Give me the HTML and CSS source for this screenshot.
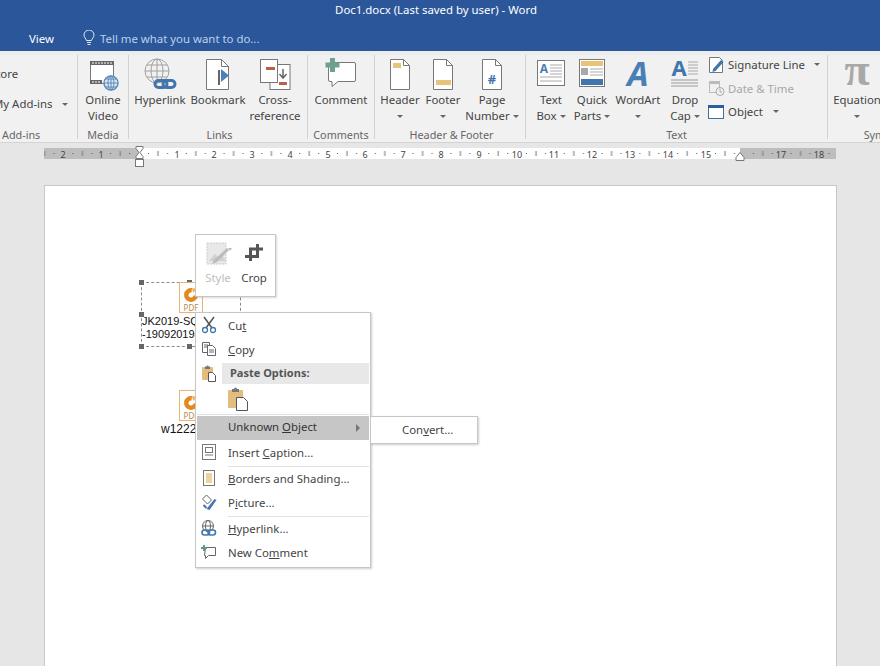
FILE: index.html
```html
<!DOCTYPE html>
<html lang="en">
<head>
<meta charset="utf-8">
<title>Doc1.docx - Word</title>
<link rel="stylesheet" href="styles.css">
</head>
<body>
<div class="app">
  <header class="titlebar">
    <div class="title">Doc1.docx (Last saved by user) - Word</div>
    <div class="tabs">
      <span class="tab">View</span>
      <svg class="bulb" width="12" height="16" viewBox="0 0 12 16"><path d="M3.500 10.500C3 8.500 1 7.500 1 5a5 5 0 0 1 10 0c0 2.500-2 3.500-2.500 5.500zM4 12.500h4M4.500 14.500h3" fill="none" stroke="#dfe8f4" stroke-width="1"/></svg>
      <span class="tell">Tell me what you want to do...</span>
    </div>
  </header>

  <section class="ribbon">
    <div class="group g-addins">
      <div class="row">
        <div class="addin-col"><span>Store</span><span class="addin-my">My Add-ins <i class="caret caret-addin"></i></span></div>
      </div>
      <div class="glabel">Add-ins</div>
    </div>
    <div class="group g-media">
      <div class="row">
        <div class="btn w50">
          <svg class="ic" width="34" height="36" viewBox="0 0 34 36"><rect x="4.500" y="5.500" width="23" height="22" fill="#fff" stroke="#777"/><rect x="4" y="5" width="24" height="4" fill="#666"/><rect x="4" y="24" width="12" height="4" fill="#666"/><path d="M6 7h20M6 26h9" stroke="#fff" stroke-dasharray="2 1"/><circle cx="25" cy="27" r="7" fill="#dbe8f5" stroke="#5a8ab8" stroke-width="1.400"/><path d="M18 27h14M25 20v14M20 23h10M20 31h10" stroke="#5a8ab8"/><ellipse cx="25" cy="27" rx="3" ry="7" fill="none" stroke="#5a8ab8"/></svg>
          <span class="lbl">Online<br>Video</span>
        </div>
      </div>
      <div class="glabel">Media</div>
    </div>
    <div class="group g-links">
      <div class="row">
        <div class="btn w56">
          <svg class="ic" width="36" height="36" viewBox="0 0 36 36"><g fill="none" stroke="#a0a0a0"><circle cx="15" cy="15" r="12"/><ellipse cx="15" cy="15" rx="6" ry="12"/><path d="M3 15h24M15 3v24M5 9h20M5 21h20"/></g><g fill="none" stroke="#3f77ad" stroke-width="3"><rect x="13" y="24.500" width="12" height="7" rx="3.500"/><rect x="21" y="24.500" width="12" height="7" rx="3.500"/></g></svg>
          <span class="lbl">Hyperlink</span>
        </div>
        <div class="btn w60">
          <svg class="ic" width="28" height="36" viewBox="0 0 28 36"><path d="M2.500 3.500h15l7 7v23h-22z" fill="#fff" stroke="#777"/><path d="M17.500 3.500v7h7" fill="none" stroke="#777"/><rect x="14" y="14" width="2" height="15" fill="#666"/><path d="M17 13l8 6.500-8 6.500z" fill="#4a82b8"/></svg>
          <span class="lbl">Bookmark</span>
        </div>
        <div class="btn w54">
          <svg class="ic" width="34" height="36" viewBox="0 0 34 36"><rect x="12" y="8.500" width="20" height="25" fill="#fff" stroke="#777"/><rect x="2.500" y="3.500" width="17" height="23" fill="#fff" stroke="#777"/><rect x="8" y="11" width="9" height="3" fill="#b9604b"/><rect x="21" y="26" width="8" height="3" fill="#b9604b"/><path d="M25 13v8M21.500 18l3.500 4 3.500-4" fill="none" stroke="#666" stroke-width="1.500"/></svg>
          <span class="lbl">Cross-<br>reference</span>
        </div>
      </div>
      <div class="glabel">Links</div>
    </div>
    <div class="group g-comments">
      <div class="row">
        <div class="btn wfull">
          <svg class="ic" width="34" height="36" viewBox="0 0 34 36"><path d="M7 6.500h23a1.500 1.500 0 0 1 1.500 1.500v16a1.500 1.500 0 0 1-1.500 1.500H14l-6 5v-5H6A1.500 1.500 0 0 1 4.500 24V8z" fill="#fff" stroke="#777"/><path d="M6 2h5v4.500h4.500v5H11V16H6v-4.500H1.500v-5H6z" fill="#6f9f8f"/></svg>
          <span class="lbl">Comment</span>
        </div>
      </div>
      <div class="glabel">Comments</div>
    </div>
    <div class="group g-hf">
      <div class="row">
        <div class="btn w44">
          <svg class="ic" width="24" height="36" viewBox="0 0 24 36"><path d="M2.500 3.500h13l6 6v24h-19z" fill="#fff" stroke="#777"/><path d="M15.500 3.500v6h6" fill="none" stroke="#777"/><rect x="5" y="7" width="8" height="5" fill="#e7c47b"/></svg>
          <span class="lbl">Header<br><i class="caret"></i></span>
        </div>
        <div class="btn w42">
          <svg class="ic" width="24" height="36" viewBox="0 0 24 36"><path d="M2.500 3.500h13l6 6v24h-19z" fill="#fff" stroke="#777"/><path d="M15.500 3.500v6h6" fill="none" stroke="#777"/><rect x="5" y="24" width="15" height="5" fill="#e7c47b"/></svg>
          <span class="lbl">Footer<br><i class="caret"></i></span>
        </div>
        <div class="btn w56">
          <svg class="ic" width="24" height="36" viewBox="0 0 24 36"><path d="M2.500 3.500h13l6 6v24h-19z" fill="#fff" stroke="#777"/><path d="M15.500 3.500v6h6" fill="none" stroke="#777"/><text x="12" y="28" class="hash">#</text></svg>
          <span class="lbl">Page<br>Number <i class="caret"></i></span>
        </div>
      </div>
      <div class="glabel">Header &amp; Footer</div>
    </div>
    <div class="group g-text">
      <div class="row">
        <div class="btn w36">
          <svg class="ic" width="30" height="36" viewBox="0 0 30 36"><rect x="1.500" y="4.500" width="27" height="25" fill="#fff" stroke="#777"/><text x="8" y="17" class="abox">A</text><path d="M14 9h12M14 12h12M14 15h12M14 18h12M4 21h22M4 25h22" stroke="#aaa"/></svg>
          <span class="lbl">Text<br>Box <i class="caret"></i></span>
        </div>
        <div class="btn w46">
          <svg class="ic" width="28" height="36" viewBox="0 0 28 36"><rect x="1.500" y="3.500" width="25" height="27" fill="#fff" stroke="#777"/><rect x="3" y="5" width="22" height="5" fill="#e7c47b"/><rect x="3" y="12" width="7" height="7" fill="#a8a8a8"/><path d="M12 13h13M12 16h13M12 19h13" stroke="#aaa"/><rect x="3" y="23" width="22" height="6" fill="#3f77ad"/></svg>
          <span class="lbl">Quick<br>Parts <i class="caret"></i></span>
        </div>
        <div class="btn w46">
          <svg class="ic" width="26" height="36" viewBox="0 0 26 36"><text x="13" y="30" class="wordart">A</text></svg>
          <span class="lbl">WordArt<br><i class="caret"></i></span>
        </div>
        <div class="btn w48">
          <svg class="ic" width="30" height="36" viewBox="0 0 30 36"><text x="9" y="20" class="dropa">A</text><path d="M18 6h10M18 9h10M18 12h10M18 15h10M18 18h10" stroke="#aaa"/><path d="M1 24h27M1 27h27M1 30h27" stroke="#999"/></svg>
          <span class="lbl">Drop<br>Cap <i class="caret"></i></span>
        </div>
        <div class="small-col">
          <div class="small">
            <svg width="17" height="18" viewBox="0 0 17 18"><path d="M1.500 1.500h10l3 3v12h-13z" fill="#fff" stroke="#777"/><path d="M5 13l8-9 2.500 2-8 9-3 1z" fill="#3f77ad"/></svg>
            <span>Signature Line</span><i class="caret caret-sig"></i>
          </div>
          <div class="small disabled">
            <svg width="17" height="18" viewBox="0 0 17 18"><rect x="1.500" y="2.500" width="10" height="11" fill="none" stroke="#bbb"/><rect x="1" y="2" width="11" height="3" fill="#bbb"/><circle cx="12" cy="12.500" r="4" fill="#f1f1f1" stroke="#aaa"/><path d="M12 10v3h2" fill="none" stroke="#aaa"/></svg>
            <span>Date &amp; Time</span>
          </div>
          <div class="small">
            <svg width="17" height="18" viewBox="0 0 17 18"><rect x=".5" y="2.500" width="15" height="13" fill="#fff" stroke="#3f6fa5"/><rect x="0" y="2" width="16" height="3" fill="#2b5f99"/></svg>
            <span>Object</span><i class="caret caret-obj"></i>
          </div>
        </div>
      </div>
      <div class="glabel glabel-text">Text</div>
    </div>
    <div class="group g-sym">
      <div class="row">
        <div class="btn w50">
          <svg class="ic" width="30" height="36" viewBox="0 0 30 36"><text x="15" y="29" class="pi">π</text></svg>
          <span class="lbl">Equation<br><i class="caret"></i></span>
        </div>
      </div>
      <div class="glabel">Symbols</div>
    </div>
  </section>

  <div class="rulerbar">
    <svg class="ruler" width="792" height="22" viewBox="44 143 792 22">
      <defs>
        <pattern id="ticks" x="139" y="148" width="37.8" height="11" patternUnits="userSpaceOnUse">
          <rect x="9" y="5" width="1" height="1" fill="#555"/>
          <rect x="18.500" y="3" width="1" height="5" fill="#777"/>
          <rect x="28" y="5" width="1" height="1" fill="#555"/>
        </pattern>
      </defs>
      <rect x="44" y="148" width="792" height="11" fill="#fff"/>
      <rect x="44" y="148" width="96" height="11" fill="#bdbdbd"/>
      <rect x="740" y="148" width="96" height="11" fill="#bdbdbd"/>
      <rect x="44" y="148" width="792" height="11" fill="url(#ticks)"/>
      <g class="rnum">
        <text x="63" y="158">2</text><text x="101" y="158">1</text>
        <text x="177" y="158">1</text><text x="214" y="158">2</text><text x="252" y="158">3</text><text x="290" y="158">4</text><text x="328" y="158">5</text><text x="365" y="158">6</text><text x="403" y="158">7</text><text x="441" y="158">8</text><text x="479" y="158">9</text><text x="517" y="158">10</text><text x="554" y="158">11</text><text x="592" y="158">12</text><text x="630" y="158">13</text><text x="668" y="158">14</text><text x="706" y="158">15</text><text x="781" y="158">17</text><text x="819" y="158">18</text>
      </g>
      <path d="M136 146.500h7v2l-3 4 3 4v2h-7v-2l3-4-3-4z" fill="#fff" stroke="#777"/>
      <rect x="135.500" y="159.500" width="8" height="7" fill="#fff" stroke="#777"/>
      <path d="M736 160.500v-3l4-5 4 5v3z" fill="#fff" stroke="#777"/>
    </svg>
  </div>

  <main class="canvas">
    <div class="page">
      <div class="obj obj-a">
        <span class="hd h1"></span><span class="hd h2"></span><span class="hd h3"></span><span class="hd h4"></span><span class="hd h5"></span><span class="hd h6"></span>
        <div class="pdf"><svg width="16" height="16" viewBox="0 0 16 16"><path d="M9 1a7 7 0 1 0 6 7.500h-4.500a2.500 2.500 0 1 1-2-3z" fill="#e28a1f"/><path d="M9 1l5 1-4 4z" fill="#f2b25a"/></svg><span>PDF</span></div>
        <div class="objtext">JK2019-SQ8<br>-19092019-</div>
      </div>
      <div class="obj-b">
        <div class="pdf"><svg width="16" height="16" viewBox="0 0 16 16"><path d="M9 1a7 7 0 1 0 6 7.500h-4.500a2.500 2.500 0 1 1-2-3z" fill="#e28a1f"/><path d="M9 1l5 1-4 4z" fill="#f2b25a"/></svg><span>PDF</span></div>
        <div class="objtext2">w1222(</div>
      </div>
    </div>

    <div class="mini">
      <div class="mini-btn faded">
        <svg width="28" height="24" viewBox="0 0 28 24"><rect x="3" y="1" width="19" height="21" fill="#e8e8e8" stroke="#ccc" stroke-dasharray="2 1"/><path d="M5 19l6-7 4 4 3-3 4 6z" fill="#d0d0d0"/><path d="M8 22l2-4 13-12 2 2-12 12z" fill="#bbb"/><path d="M24 6h4l-2 3z" fill="#bbb"/></svg>
        <span>Style</span>
      </div>
      <div class="mini-btn">
        <svg class="crop" width="18" height="24" viewBox="0 0 18 24"><path d="M18 5H5.500v12M12.500 0v12.500H0" transform="translate(0 2)" fill="none" stroke="#555" stroke-width="3"/></svg>
        <span>Crop</span>
      </div>
    </div>

    <div class="menu">
      <div class="mi mi24">
        <svg class="mic" width="16" height="18" viewBox="0 0 16 18"><path d="M3 1l8 11M13 1L5 12" stroke="#555" stroke-width="1.500" fill="none"/><circle cx="4" cy="14" r="2.500" fill="none" stroke="#3f77ad" stroke-width="1.300"/><circle cx="12" cy="14" r="2.500" fill="none" stroke="#3f77ad" stroke-width="1.300"/></svg>
        <span>Cu<u>t</u></span>
      </div>
      <div class="mi mi24">
        <svg class="mic" width="16" height="16" viewBox="0 0 16 16"><path d="M1.500 1.500h7v10h-7z" fill="#fff" stroke="#666"/><path d="M6.500 4.500h5l3 3v7h-8z" fill="#fff" stroke="#666"/><path d="M3 4h4M3 6h3M8 9h5M8 11h5" stroke="#666"/></svg>
        <span><u>C</u>opy</span>
      </div>
      <div class="mi-head">
        <svg class="mic" width="16" height="18" viewBox="0 0 16 18"><rect x="1" y="3" width="11" height="13" rx="1" fill="#e3bd7d"/><path d="M4 5V2.500h1.500a1 1 0 0 1 2 0H9V5z" fill="#777"/><path d="M7.500 8.500h4l3 3v6h-7z" fill="#fff" stroke="#555"/></svg>
        <span class="head-text">Paste Options:</span>
      </div>
      <div class="mi-paste">
        <svg width="22" height="24" viewBox="0 0 22 24"><rect x="1" y="3" width="15" height="18" rx="1" fill="#e3bd7d"/><path d="M5 5V2h2a1.500 1.500 0 0 1 3 0h2v3z" fill="#777"/><path d="M9.500 10.500h7l4 4v9h-11z" fill="#fff" stroke="#555"/></svg>
      </div>
      <div class="mi mi-active">
        <span class="mic-spacer"></span>
        <span>Unknown <u>O</u>bject</span>
        <i class="arrow"></i>
      </div>
      <div class="mi mi25 sep">
        <svg class="mic" width="14" height="16" viewBox="0 0 14 16"><rect x=".5" y=".5" width="13" height="15" fill="#fff" stroke="#777"/><rect x="3.500" y="3.500" width="7" height="5" fill="none" stroke="#777"/><path d="M3 11h8" stroke="#777"/></svg>
        <span>Insert <u>C</u>aption...</span>
      </div>
      <div class="mi mi24">
        <svg class="mic" width="14" height="16" viewBox="0 0 14 16"><rect x="1.500" y=".5" width="11" height="15" fill="#fff" stroke="#777"/><rect x="4" y="3" width="6" height="10" fill="#ecd49f"/></svg>
        <span><u>B</u>orders and Shading...</span>
      </div>
      <div class="mi mi25 sep">
        <svg class="mic" width="17" height="17" viewBox="0 0 17 17"><path d="M2 5l4-4 5 5-4 4z" fill="#fff" stroke="#666"/><path d="M6 15l8-10 2 1-7 10z" fill="#3f77ad"/><path d="M3 11l3 3" stroke="#3f77ad" stroke-width="2"/></svg>
        <span>P<u>i</u>cture...</span>
      </div>
      <div class="mi mi24">
        <svg class="mic" width="16" height="17" viewBox="0 0 16 17"><g fill="none" stroke="#666"><circle cx="7" cy="6" r="5.500"/><ellipse cx="7" cy="6" rx="2.500" ry="5.500"/><path d="M1.500 6h11"/></g><g fill="none" stroke="#3f77ad" stroke-width="1.600"><rect x="1" y="10" width="7.500" height="5" rx="2.500"/><rect x="7" y="10" width="7.500" height="5" rx="2.500"/></g></svg>
        <span><u>H</u>yperlink...</span>
      </div>
      <div class="mi mi24">
        <svg class="mic" width="16" height="16" viewBox="0 0 16 16"><path d="M4.500 3.500h10v8h-7l-3 3v-3h-1z" fill="#fff" stroke="#666"/><path d="M2 1h2v2h2v2H4v2H2V5H0V3h2z" fill="#5f9a88"/></svg>
        <span>New Co<u>m</u>ment</span>
      </div>
    </div>

    <div class="submenu"><span>Con<u>v</u>ert...</span></div>
  </main>
</div>
</body>
</html>
```

FILE: styles.css
```css
* { box-sizing: border-box; }
html, body { margin: 0; padding: 0; }
body { font-family: "Noto Sans", "Open Sans", sans-serif; font-size: 11.4px; color: #444; background: #e6e6e6; overflow: hidden; }
.app { width: 880px; height: 666px; display: flex; flex-direction: column; overflow: hidden; }

.titlebar { height: 51px; background: #2b579a; color: #fff; flex: none; }
.title { height: 22px; line-height: 20px; text-align: center; padding-right: 8px; }
.tabs { display: flex; align-items: center; height: 29px; padding-left: 29px; padding-top: 3px; }
.tab { width: 54px; }
.bulb { flex: none; }
.tell { margin-left: 5px; color: #bcd0ea; }

.ribbon { height: 92px; flex: none; display: flex; background: #f1f1f1; border-top: 4px solid #e9edf0; border-bottom: 1px solid #d4d4d4; overflow: hidden; }
.group { flex: none; display: flex; flex-direction: column; border-right: 1px solid #d2d2d2; height: 84px; }
.row { height: 73px; flex: none; display: flex; padding-top: 1px; }
.glabel { height: 11px; line-height: 14px; text-align: center; font-size: 10.8px; color: #666; }
.glabel-text { padding-right: 7px; }
.g-addins { width: 118px; margin-left: -40px; }
.g-addins .glabel { text-align: left; padding-left: 42px; }
.g-media { width: 51px; }
.g-links { width: 179px; padding-left: 3px; }
.g-comments { width: 67px; }
.g-hf { width: 151px; padding-left: 3px; }
.g-text { width: 302px; padding-left: 7px; }
.g-sym { width: 110px; border-right: 0; padding-left: 4px; }

.addin-col { display: flex; flex-direction: column; gap: 15px; padding: 10px 0 0 30px; white-space: nowrap; }
.addin-my { margin-left: 3px; }
.caret { display: inline-block; width: 0; height: 0; border-left: 3px solid transparent; border-right: 3px solid transparent; border-top: 3px solid #666; vertical-align: middle; }
.caret-addin { margin-left: 7px; }

.btn { flex: none; display: flex; flex-direction: column; align-items: center; text-align: center; }
.ic { height: 36px; flex: none; display: block; }
.lbl { line-height: 16px; white-space: nowrap; }
.w36 { width: 36px; } .w42 { width: 42px; } .w44 { width: 44px; } .w46 { width: 46px; } .w48 { width: 48px; }
.w50 { width: 50px; } .w54 { width: 54px; } .w56 { width: 56px; } .w60 { width: 60px; } .wfull { width: 100%; }

.small-col { display: flex; flex-direction: column; margin-top: -3px; margin-left: -1px; }
.small { height: 23.500px; display: flex; align-items: center; gap: 3px; white-space: nowrap; }
.small.disabled { color: #a8a8a8; }
.caret-sig { margin-left: 6px; }
.caret-obj { margin-left: 7px; }

.hash { font: bold 13px "Noto Sans", sans-serif; fill: #3f77ad; text-anchor: middle; }
.abox { font: bold 12px "Noto Sans", sans-serif; fill: #4a7fb5; text-anchor: middle; }
.wordart { font: italic bold 34px "Noto Sans", sans-serif; fill: #4a7fb5; text-anchor: middle; }
.dropa { font: bold 22px "Noto Sans", sans-serif; fill: #3f77ad; text-anchor: middle; }
.pi { font: bold 46px "Liberation Serif", serif; fill: #a8a8a8; text-anchor: middle; }

.rulerbar { height: 22px; flex: none; padding-left: 44px; background: #e6e6e6; }
.ruler { display: block; overflow: visible; }
.rnum text { font: 9px "Noto Sans", sans-serif; fill: #444; text-anchor: middle; }

.canvas { flex: 1; position: relative; padding: 20px 44px 0; }
.page { width: 793px; height: 600px; background: #fff; border: 1px solid #c8c8c8; }

.obj { position: absolute; left: 141px; top: 117px; width: 100px; height: 65px; border: 1px dashed #8a8a8a; }
.hd { position: absolute; width: 5px; height: 5px; background: #666; }
.h1 { left: -3px; top: -3px; } .h2 { left: 45px; top: -3px; } .h3 { right: -3px; top: -3px; }
.h4 { left: -3px; bottom: -3px; } .h5 { left: 45px; bottom: -3px; } .h6 { left: -3px; top: 29px; }
.pdf { position: absolute; width: 24px; height: 31px; background: #fff; border: 1px solid #e8b673; display: flex; flex-direction: column; align-items: center; padding-top: 4px; }
.pdf span { font-size: 8px; line-height: 9px; color: #b98a4a; }
.obj .pdf { left: 37px; top: -1px; }
.objtext { position: absolute; left: 0; top: 32px; font-family: "Liberation Sans", sans-serif; font-size: 11px; line-height: 13px; color: #111; white-space: nowrap; width: 60px; overflow: hidden; }
.obj-b { position: absolute; left: 161px; top: 225px; width: 40px; height: 48px; }
.obj-b .pdf { left: 18px; top: 0; }
.objtext2 { position: absolute; left: 0; top: 32px; font-family: "Liberation Sans", sans-serif; font-size: 12px; line-height: 14px; color: #111; }

.mini { position: absolute; left: 195px; top: 69px; width: 81px; height: 63px; background: #fff; border: 1px solid #c6c6c6; box-shadow: 1px 1px 2px rgba(0,0,0,.15); display: flex; padding: 7px 0 0 9px; gap: 10px; }
.mini-btn { display: flex; flex-direction: column; align-items: center; gap: 4px; width: 26px; }
.mini-btn span { line-height: 16px; }
.faded { color: #bdbdbd; }

.menu { position: absolute; left: 195px; top: 147px; width: 176px; height: 256px; background: #fff; border: 1px solid #c6c6c6; box-shadow: 1px 1px 2px rgba(0,0,0,.2); padding: 1px; display: flex; flex-direction: column; }
.mi { display: flex; align-items: center; flex: none; height: 24px; padding-bottom: 2px; }
.mi25 { height: 26px; padding-bottom: 4px; }
.mi.sep { position: relative; }
.mi.sep::after { content: ""; position: absolute; left: 31px; right: 0; bottom: 0; height: 1px; background: #e2e2e2; }
.mic { flex: none; margin: 0 9px 0 2px; width: 20px; }
.mic-spacer { width: 31px; flex: none; }
.mi-head { height: 22px; display: flex; align-items: center; flex: none; position: relative; }
.head-text { flex: 1; margin-left: -6px; height: 21px; line-height: 20px; padding-left: 8px; background: #e8e8e8; font-weight: 700; font-size: 11px; color: #555; }
.mi-paste { height: 31px; padding: 3px 0 0 30px; flex: none; border-bottom: 1px solid #e2e2e2; margin-bottom: 1px; }
.mi-paste svg { display: block; }
.mi-active { background: #c6c6c6; height: 24px; margin-bottom: 1px; position: relative; color: #333; padding-bottom: 3px; }
.arrow { position: absolute; right: 9px; top: 8px; width: 0; height: 0; border-top: 4px solid transparent; border-bottom: 4px solid transparent; border-left: 4px solid #777; }

.submenu { position: absolute; left: 370px; top: 251px; width: 108px; height: 28px; background: #fff; border: 1px solid #c6c6c6; box-shadow: 1px 1px 2px rgba(0,0,0,.2); padding-left: 31px; line-height: 25px; }
```
